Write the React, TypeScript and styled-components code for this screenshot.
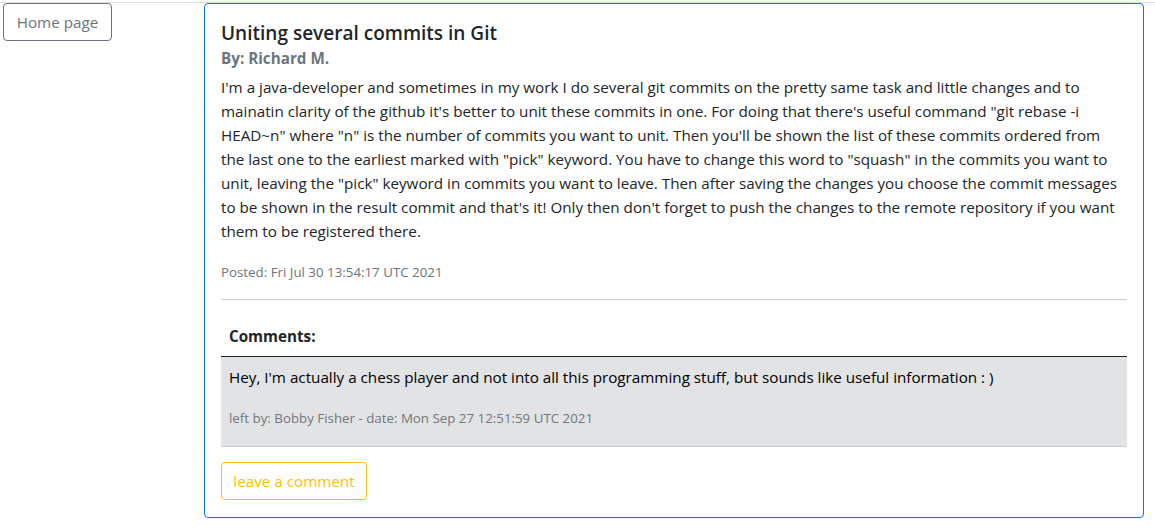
import React from "react";
import styled, { createGlobalStyle } from "styled-components";

const Global = createGlobalStyle`
  html, body {
    margin: 0;
    padding: 0;
    background: #fff;
  }
  body {
    font-family: "Open Sans", "Noto Sans", sans-serif;
    font-size: 15.22px;
    line-height: 24px;
    color: #212529;
  }
  * { box-sizing: border-box; }
`;

const TopRule = styled.div`
  height: 3px;
  border-bottom: 1px solid #dedede;
`;

const Page = styled.div`
  display: grid;
  grid-template-columns: 201px 940px;
  padding-left: 3px;
  align-items: start;
`;

const Side = styled.aside`
  display: flex;
`;

const OutlineButton = styled.button<{ $tone: "secondary" | "warning" }>`
  font-family: inherit;
  font-size: 15.22px;
  line-height: 24px;
  height: 38px;
  padding: 6px 12px;
  background: #fff;
  border-radius: 4px;
  cursor: pointer;
  white-space: nowrap;
  color: ${(p) => (p.$tone === "secondary" ? "#6c757d" : "#ffc107")};
  border: 1px solid ${(p) => (p.$tone === "secondary" ? "#6c757d" : "#ffc107")};
`;

const HomeButton = styled(OutlineButton)`
  width: 109px;
`;

const CommentButton = styled(OutlineButton)`
  width: 146px;
  padding: 6px 0;
`;

const Card = styled.article`
  border: 1px solid #0d6efd;
  border-radius: 4px;
  padding: 16px 16px 17px;
  background: #fff;
`;

const Title = styled.h5`
  margin: 1px 0 8px;
  font-size: 19.03px;
  line-height: 24px;
  font-weight: 600;
  color: #212529;
`;

const Subtitle = styled.h6`
  margin: -4px 0 7px;
  font-size: 15.22px;
  line-height: 19px;
  font-weight: 700;
  color: #6c757d;
`;

const Body = styled.p`
  margin: 0 0 16px;
`;

const Muted = styled.small`
  font-size: 13.32px;
  color: #6c757d;
`;

const Posted = styled.p`
  margin: 0;
`;

const Rule = styled.hr`
  margin: 15px 0 16px;
  border: 0;
  border-top: 1px solid #cdcdcd;
  height: 0;
`;

const Table = styled.table`
  width: 100%;
  border-collapse: collapse;
  margin-bottom: 15px;
`;

const Th = styled.th`
  text-align: left;
  padding: 8px;
  font-weight: 700;
  border-bottom: 1px solid #212529;
`;

const Td = styled.td`
  padding: 8px;
  background: #e2e3e5;
  color: #000;
  border-bottom: 1px solid #cbccce;
`;

const CommentText = styled.p`
  margin: 0 0 16px;
`;

const CommentMeta = styled.p`
  margin: 0 0 8px;
  small {
    color: #73777b;
  }
`;

export default function App() {
  return (
    <>
      <Global />
      <TopRule />
      <Page>
        <Side>
          <HomeButton $tone="secondary">Home page</HomeButton>
        </Side>
        <Card>
          <Title>Uniting several commits in Git</Title>
          <Subtitle>By: Richard M.</Subtitle>
          <Body>
            I'm a java-developer and sometimes in my work I do several git commits on the pretty same
            task and little changes and to mainatin clarity of the github it's better to unit these
            commits in one. For doing that there's useful command "git rebase -i HEAD~n" where "n" is
            the number of commits you want to unit. Then you'll be shown the list of these commits
            ordered from the last one to the earliest marked with "pick" keyword. You have to change
            this word to "squash" in the commits you want to unit, leaving the "pick" keyword in
            commits you want to leave. Then after saving the changes you choose the commit messages to
            be shown in the result commit and that's it! Only then don't forget to push the changes to
            the remote repository if you want them to be registered there.
          </Body>
          <Posted>
            <Muted>Posted: Fri Jul 30 13:54:17 UTC 2021</Muted>
          </Posted>
          <Rule />
          <Table>
            <thead>
              <tr>
                <Th>Comments:</Th>
              </tr>
            </thead>
            <tbody>
              <tr>
                <Td>
                  <CommentText>
                    Hey, I'm actually a chess player and not into all this programming stuff, but
                    sounds like useful information : )
                  </CommentText>
                  <CommentMeta>
                    <Muted>left by: Bobby Fisher - date: Mon Sep 27 12:51:59 UTC 2021</Muted>
                  </CommentMeta>
                </Td>
              </tr>
            </tbody>
          </Table>
          <CommentButton $tone="warning">leave a comment</CommentButton>
        </Card>
      </Page>
    </>
  );
}
